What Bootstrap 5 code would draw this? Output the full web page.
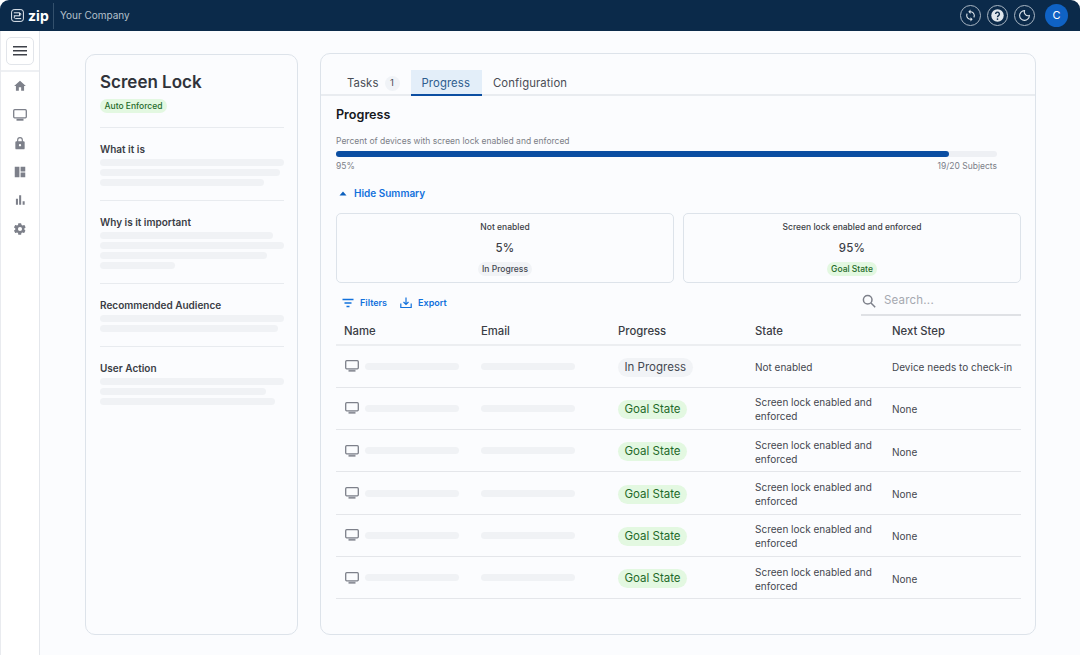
<!DOCTYPE html>
<html lang="en">
<head>
<meta charset="utf-8">
<title>Screen Lock</title>
<link href="https://cdn.jsdelivr.net/npm/bootstrap@5.3.0/dist/css/bootstrap.min.css" rel="stylesheet">
<style>
html,body{height:655px;overflow:hidden;background:#fff;}
body{font-family:Inter,"Liberation Sans",sans-serif;color:#33363f;}
.shell{width:1080px;height:655px;display:flex;flex-direction:column;}
.topbar{height:31px;background:#0b2a4a;border-radius:9px 9px 0 0;padding:0 12px 0 11px;flex:none;}
.brand{color:#fff;font-size:14px;font-weight:700;line-height:1;letter-spacing:.1px;margin-left:4px;}
.brand-sep{width:1px;height:26px;background:#33506c;margin:0 6px 0 4px;}
.company{color:#b4c0cc;font-size:10px;}
.round-ic{width:21px;height:21px;border:1px solid #a9b6c3;border-radius:50%;display:flex;align-items:center;justify-content:center;}
.avatar{width:23px;height:23px;border-radius:50%;background:#0f62c4;color:#fff;font-size:11px;margin-left:4px;}
.main-wrap{flex:1;min-height:0;}
.sidenav{width:40px;flex:none;background:#fff;border-right:1px solid #e4e7ec;border-left:1px solid #e9ebef;}
.menu-box{height:41px;border-bottom:2px solid #eef0f3;padding-top:6px;}
.menu-btn{width:28px;height:28px;border:1px solid #e2e5ea;border-radius:5px;background:#fff;}
.nav-ic{height:28.5px;}
.canvas{flex:1;background:#fbfcfe;padding:23px 44px 20px 45px;gap:22px;min-width:0;}
.panel-l{width:213px;height:581px;border:1px solid #dde3ea;border-radius:10px;padding:15px 13px 15px 14px;flex:none;}
.panel-r{width:716px;height:582px;border:1px solid #dde3ea;border-radius:10px;margin-top:-1px;flex:none;}
.title-main{font-size:17px;font-weight:600;line-height:24px;margin:0;color:#30333b;}
.badge-line{margin:5px 0 14px;}
.pill-sm{display:inline-block;font-size:8.5px;line-height:14px;padding:0 4.5px;border-radius:8px;font-weight:500;}
.pill-green{background:#e3f8e1;color:#1f6a2a;}
.pill-grey{background:#f1f3f6;color:#444851;}
.sec{border-top:1px solid #e8ebef;padding-top:14px;}
.sec-h{font-size:10px;font-weight:600;line-height:14px;margin:0 0 3px;color:#3a3d45;}
.sec-a{height:73px;}
.sec-b{height:83px;}
.sec-c{height:63px;}
.skel{height:7px;border-radius:4px;background:#f0f2f5;margin-bottom:3px;}
.tabs-row{height:42px;border-bottom:2px solid #e9ecf0;padding-left:15px;padding-top:16px;}
.tab-it{height:26px;font-size:11.3px;line-height:26px;color:#494c55;padding:0 11px;letter-spacing:.01em;}
.tab-on{background:#e3eef9;color:#2d5c8e;border-bottom:2px solid #0b4ea2;padding:0 12px 0 11px;}
.tab-count{display:inline-flex;width:15px;height:15px;border-radius:50%;background:#f0f3f7;font-size:9.5px;align-items:center;justify-content:center;margin-left:6px;}
.content{padding:0 14px 0 15px;}
.h-prog{font-size:12.6px;font-weight:600;color:#16181d;line-height:18px;margin:10px 0 11px;}
.small-grey{font-size:8.5px;line-height:12px;color:#7b7f88;}
.bar-track{height:6px;background:#eef0f4;border-radius:3px;margin:4px 24px 3px 0;}
.bar-fill{height:6px;background:#0b4ea2;border-radius:3px;}
.bar-meta{margin-right:24px;}
.link-blue{color:#1271dc;font-size:10px;font-weight:600;line-height:14px;margin-top:14px;}
.caret-up{margin:0 7px 0 3px;}
.summary-row{gap:9px;margin-top:13px;}
.sum-box{flex:1;height:70px;border:1px solid #dde3ea;border-radius:5px;padding-top:7px;}
.sum-t{font-size:8.5px;font-weight:500;line-height:12px;color:#3b3e46;}
.sum-v{font-size:11.5px;font-weight:500;line-height:16px;margin:7px 0 6px;color:#3b3e46;letter-spacing:.3px;}
.tools{height:33px;}
.tool-links{padding-top:7px;padding-left:6px;}
.link-sm{color:#1271dc;font-size:9px;font-weight:600;margin-left:6px;}
.export-ic{margin-left:13px;}
.search-box{width:160px;height:33px;border-bottom:2px solid #dfe1e5;padding-left:1px;padding-top:5px;}
.search-ph{font-size:11.5px;color:#a6a9b0;letter-spacing:.2px;margin-left:8px;}
table.tbl{width:685px;table-layout:fixed;margin:0;border-collapse:collapse;--bs-table-bg:transparent;}
.tbl th{height:29px;padding:2px 0 0 8px;font-size:11.3px;font-weight:500;border-bottom:2px solid #eceef1;color:#3a3d45;vertical-align:middle;}
.tbl td{height:42.3px;padding:0 0 0 8px;font-size:10px;line-height:14px;border-bottom:1px solid #e4e6ea;color:#44474f;vertical-align:middle;}
.tbl td:nth-child(n+3){padding-top:2px;}
.pill-md{display:inline-block;font-size:11.5px;line-height:19px;padding:0 6.5px;border-radius:10px;}
.skel-cell{height:7px;width:94px;background:#f0f2f5;border-radius:4px;}
.dev-ic{margin-left:1px;margin-right:6px;flex:none;}
</style>
</head>
<body>
<div class="shell">
  <header class="topbar d-flex align-items-center">
    <svg width="13" height="13" viewBox="0 0 13 13" fill="none" stroke="#e8eef4" stroke-width="1"><rect x=".6" y=".6" width="11.8" height="11.8" rx="2.500"/><path d="M2.800 3.800h5.700l1.700 1.500-1.700 1.500H4.500L2.800 8.300l1.700 1.300h5.700M2.800 6.800h1.700M8.500 3.800v3"/></svg>
    <span class="brand">zip</span>
    <span class="brand-sep"></span>
    <span class="company">Your Company</span>
    <div class="ms-auto d-flex align-items-center" style="gap:6px">
      <span class="round-ic"><svg width="13" height="13" viewBox="0 0 24 24" fill="#dfe6ec"><path d="M12 4V1L8 5l4 4V6c3.300 0 6 2.700 6 6 0 1-.25 2-.7 2.800l1.460 1.460A7.900 7.900 0 0 0 20 12c0-4.400-3.600-8-8-8zm0 14c-3.300 0-6-2.700-6-6 0-1 .25-2 .7-2.800L5.240 7.740A7.900 7.900 0 0 0 4 12c0 4.400 3.600 8 8 8v3l4-4-4-4v3z"/></svg></span>
      <span class="round-ic"><svg width="13" height="13" viewBox="0 0 24 24"><circle cx="12" cy="12" r="11.500" fill="#dfe6ec"/><path d="M8.500 9.300a3.500 3.500 0 1 1 5.400 3c-1.100.700-1.900 1.300-1.900 2.700" fill="none" stroke="#0b2a4a" stroke-width="2.600"/><circle cx="12" cy="18.500" r="1.600" fill="#0b2a4a"/></svg></span>
      <span class="round-ic"><svg width="13" height="13" viewBox="0 0 24 24" fill="none" stroke="#dfe6ec" stroke-width="2"><path d="M12 3a9 9 0 1 0 9 9 7 7 0 0 1-9-9z"/></svg></span>
      <span class="avatar d-flex align-items-center justify-content-center">C</span>
    </div>
  </header>
  <div class="main-wrap d-flex">
    <nav class="sidenav d-flex flex-column">
      <div class="menu-box d-flex justify-content-center">
        <div class="menu-btn d-flex align-items-center justify-content-center">
          <svg width="14" height="10" viewBox="0 0 14 10" fill="#3e4149"><rect width="14" height="1.500"/><rect y="4" width="14" height="1.500"/><rect y="8" width="14" height="1.500"/></svg>
        </div>
      </div>
      <div class="d-flex flex-column align-items-center">
        <div class="nav-ic d-flex align-items-center"><svg width="14" height="14" viewBox="0 0 24 24" fill="#7d808a"><path d="M10 20v-6h4v6h5v-8h3L12 3 2 12h3v8z"/></svg></div>
        <div class="nav-ic d-flex align-items-center"><svg width="14" height="12" viewBox="0 0 14 12" fill="none"><rect x=".7" y=".7" width="12.6" height="8.100" rx="1" stroke="#7d808a" stroke-width="1.300"/><rect x="3.500" y="9.700" width="7" height="2" fill="#7d808a"/></svg></div>
        <div class="nav-ic d-flex align-items-center"><svg width="14" height="15" viewBox="0 0 24 24" fill="#7d808a"><path d="M18 8h-1V6A5 5 0 0 0 7 6v2H6a2 2 0 0 0-2 2v10a2 2 0 0 0 2 2h12a2 2 0 0 0 2-2V10a2 2 0 0 0-2-2zM9 6a3 3 0 0 1 6 0v2H9zm3 11a2 2 0 1 1 0-4 2 2 0 0 1 0 4z"/></svg></div>
        <div class="nav-ic d-flex align-items-center"><svg width="14" height="14" viewBox="0 0 24 24" fill="#7d808a"><path d="M3 3h8v18H3zM13 3h8v8h-8zM13 13h8v8h-8z"/></svg></div>
        <div class="nav-ic d-flex align-items-center"><svg width="14" height="14" viewBox="0 0 24 24" fill="#7d808a"><path d="M5 10h3.500v10H5zM10.500 4h3.500v16h-3.500zM16.500 14H20v6h-3.500z"/></svg></div>
        <div class="nav-ic d-flex align-items-center"><svg width="14" height="14" viewBox="0 0 24 24" fill="#7d808a"><path d="M19.400 13a7.600 7.600 0 0 0 0-2l2.100-1.600a.5.500 0 0 0 .1-.6l-2-3.500a.5.500 0 0 0-.6-.2l-2.500 1a7.300 7.300 0 0 0-1.700-1L14 2.400a.5.500 0 0 0-.5-.4h-4a.5.500 0 0 0-.5.400l-.4 2.700a7.300 7.300 0 0 0-1.700 1l-2.500-1a.5.500 0 0 0-.6.200l-2 3.500a.5.500 0 0 0 .1.600L4 11a7.600 7.600 0 0 0 0 2l-2.100 1.600a.5.500 0 0 0-.1.600l2 3.500c.1.200.4.300.6.200l2.500-1c.5.400 1.100.7 1.700 1l.4 2.700c0 .2.200.4.500.4h4c.3 0 .5-.2.500-.4l.4-2.700c.6-.3 1.200-.6 1.700-1l2.500 1c.2.100.5 0 .6-.2l2-3.500a.5.500 0 0 0-.1-.6zM12 15.500a3.500 3.500 0 1 1 0-7 3.500 3.500 0 0 1 0 7z"/></svg></div>
      </div>
    </nav>
    <main class="canvas d-flex align-items-start">
      <aside class="panel-l">
        <h1 class="title-main">Screen Lock</h1>
        <div class="badge-line d-flex"><span class="pill-sm pill-green">Auto Enforced</span></div>
        <section class="sec sec-a">
          <h2 class="sec-h">What it is</h2>
          <div class="skel"></div><div class="skel" style="width:98%"></div><div class="skel" style="width:89%"></div>
        </section>
        <section class="sec sec-b">
          <h2 class="sec-h">Why is it important</h2>
          <div class="skel" style="width:94%"></div><div class="skel"></div><div class="skel" style="width:91%"></div><div class="skel" style="width:41%"></div>
        </section>
        <section class="sec sec-c">
          <h2 class="sec-h">Recommended Audience</h2>
          <div class="skel"></div><div class="skel" style="width:97%"></div>
        </section>
        <section class="sec">
          <h2 class="sec-h">User Action</h2>
          <div class="skel"></div><div class="skel" style="width:90%"></div><div class="skel" style="width:95%"></div>
        </section>
      </aside>
      <section class="panel-r">
        <div class="tabs-row d-flex align-items-start">
          <div class="tab-it d-flex align-items-center">Tasks <span class="tab-count">1</span></div>
          <div class="tab-it tab-on">Progress</div>
          <div class="tab-it">Configuration</div>
        </div>
        <div class="content">
          <h2 class="h-prog">Progress</h2>
          <div class="small-grey">Percent of devices with screen lock enabled and enforced</div>
          <div class="bar-track"><div class="bar-fill" style="width:92.8%"></div></div>
          <div class="small-grey d-flex justify-content-between bar-meta"><span>95%</span><span>19/20 Subjects</span></div>
          <div class="d-flex align-items-center link-blue">
            <svg width="8" height="5" viewBox="0 0 8 5" fill="#0b5fbd" class="caret-up"><path d="M4 .5 7.500 4.500H.5z"/></svg>Hide Summary
          </div>
          <div class="d-flex summary-row">
            <div class="sum-box d-flex flex-column align-items-center"><div class="sum-t">Not enabled</div><div class="sum-v">5%</div><span class="pill-sm pill-grey">In Progress</span></div>
            <div class="sum-box d-flex flex-column align-items-center"><div class="sum-t">Screen lock enabled and enforced</div><div class="sum-v">95%</div><span class="pill-sm pill-green">Goal State</span></div>
          </div>
          <div class="tools d-flex align-items-center">
            <div class="tool-links d-flex align-items-center">
              <svg width="12" height="10" viewBox="0 0 12 10" fill="none" stroke="#1271dc" stroke-width="1.300"><path d="M.5 1.500h11M2.500 5h7M4.500 8.500h3"/></svg>
              <span class="link-sm">Filters</span>
              <svg width="12" height="12" viewBox="0 0 12 12" fill="none" stroke="#1271dc" stroke-width="1.200" class="export-ic"><path d="M6 .5v7M3.500 5 6 7.500 8.500 5M.8 6.500v4h10.400v-4"/></svg>
              <span class="link-sm">Export</span>
            </div>
            <div class="search-box ms-auto d-flex align-items-center">
              <svg width="14" height="14" viewBox="0 0 14 14" fill="none" stroke="#7d808a" stroke-width="1.500"><circle cx="5.700" cy="5.700" r="4.300"/><path d="m9 9 4.200 4.200"/></svg>
              <span class="search-ph">Search...</span>
            </div>
          </div>
          <table class="table tbl">
            <thead><tr><th>Name</th><th>Email</th><th>Progress</th><th>State</th><th>Next Step</th></tr></thead>
            <tbody><tr>
              <td><div class="d-flex align-items-center"><svg class="dev-ic" width="14" height="12" viewBox="0 0 14 12" fill="none"><rect x=".7" y=".7" width="12.6" height="8.100" rx="1" stroke="#7d808a" stroke-width="1.300"/><rect x="3.500" y="9.700" width="7" height="2" fill="#8d9099"/></svg><div class="skel-cell"></div></div></td>
              <td><div class="skel-cell"></div></td>
              <td><span class="pill-md pill-grey">In Progress</span></td>
              <td>Not enabled</td><td>Device needs to check-in</td>
            </tr>
            <tr>
              <td><div class="d-flex align-items-center"><svg class="dev-ic" width="14" height="12" viewBox="0 0 14 12" fill="none"><rect x=".7" y=".7" width="12.6" height="8.100" rx="1" stroke="#7d808a" stroke-width="1.300"/><rect x="3.500" y="9.700" width="7" height="2" fill="#8d9099"/></svg><div class="skel-cell"></div></div></td>
              <td><div class="skel-cell"></div></td>
              <td><span class="pill-md pill-green">Goal State</span></td>
              <td>Screen lock enabled and enforced</td><td>None</td>
            </tr>
            <tr>
              <td><div class="d-flex align-items-center"><svg class="dev-ic" width="14" height="12" viewBox="0 0 14 12" fill="none"><rect x=".7" y=".7" width="12.6" height="8.100" rx="1" stroke="#7d808a" stroke-width="1.300"/><rect x="3.500" y="9.700" width="7" height="2" fill="#8d9099"/></svg><div class="skel-cell"></div></div></td>
              <td><div class="skel-cell"></div></td>
              <td><span class="pill-md pill-green">Goal State</span></td>
              <td>Screen lock enabled and enforced</td><td>None</td>
            </tr>
            <tr>
              <td><div class="d-flex align-items-center"><svg class="dev-ic" width="14" height="12" viewBox="0 0 14 12" fill="none"><rect x=".7" y=".7" width="12.6" height="8.100" rx="1" stroke="#7d808a" stroke-width="1.300"/><rect x="3.500" y="9.700" width="7" height="2" fill="#8d9099"/></svg><div class="skel-cell"></div></div></td>
              <td><div class="skel-cell"></div></td>
              <td><span class="pill-md pill-green">Goal State</span></td>
              <td>Screen lock enabled and enforced</td><td>None</td>
            </tr>
            <tr>
              <td><div class="d-flex align-items-center"><svg class="dev-ic" width="14" height="12" viewBox="0 0 14 12" fill="none"><rect x=".7" y=".7" width="12.6" height="8.100" rx="1" stroke="#7d808a" stroke-width="1.300"/><rect x="3.500" y="9.700" width="7" height="2" fill="#8d9099"/></svg><div class="skel-cell"></div></div></td>
              <td><div class="skel-cell"></div></td>
              <td><span class="pill-md pill-green">Goal State</span></td>
              <td>Screen lock enabled and enforced</td><td>None</td>
            </tr>
            <tr>
              <td><div class="d-flex align-items-center"><svg class="dev-ic" width="14" height="12" viewBox="0 0 14 12" fill="none"><rect x=".7" y=".7" width="12.6" height="8.100" rx="1" stroke="#7d808a" stroke-width="1.300"/><rect x="3.500" y="9.700" width="7" height="2" fill="#8d9099"/></svg><div class="skel-cell"></div></div></td>
              <td><div class="skel-cell"></div></td>
              <td><span class="pill-md pill-green">Goal State</span></td>
              <td>Screen lock enabled and enforced</td><td>None</td>
            </tr></tbody>
          </table>
        </div>
      </section>
    </main>
  </div>
</div>
<script src="https://cdn.jsdelivr.net/npm/bootstrap@5.3.0/dist/js/bootstrap.bundle.min.js"></script>
</body>
</html>
